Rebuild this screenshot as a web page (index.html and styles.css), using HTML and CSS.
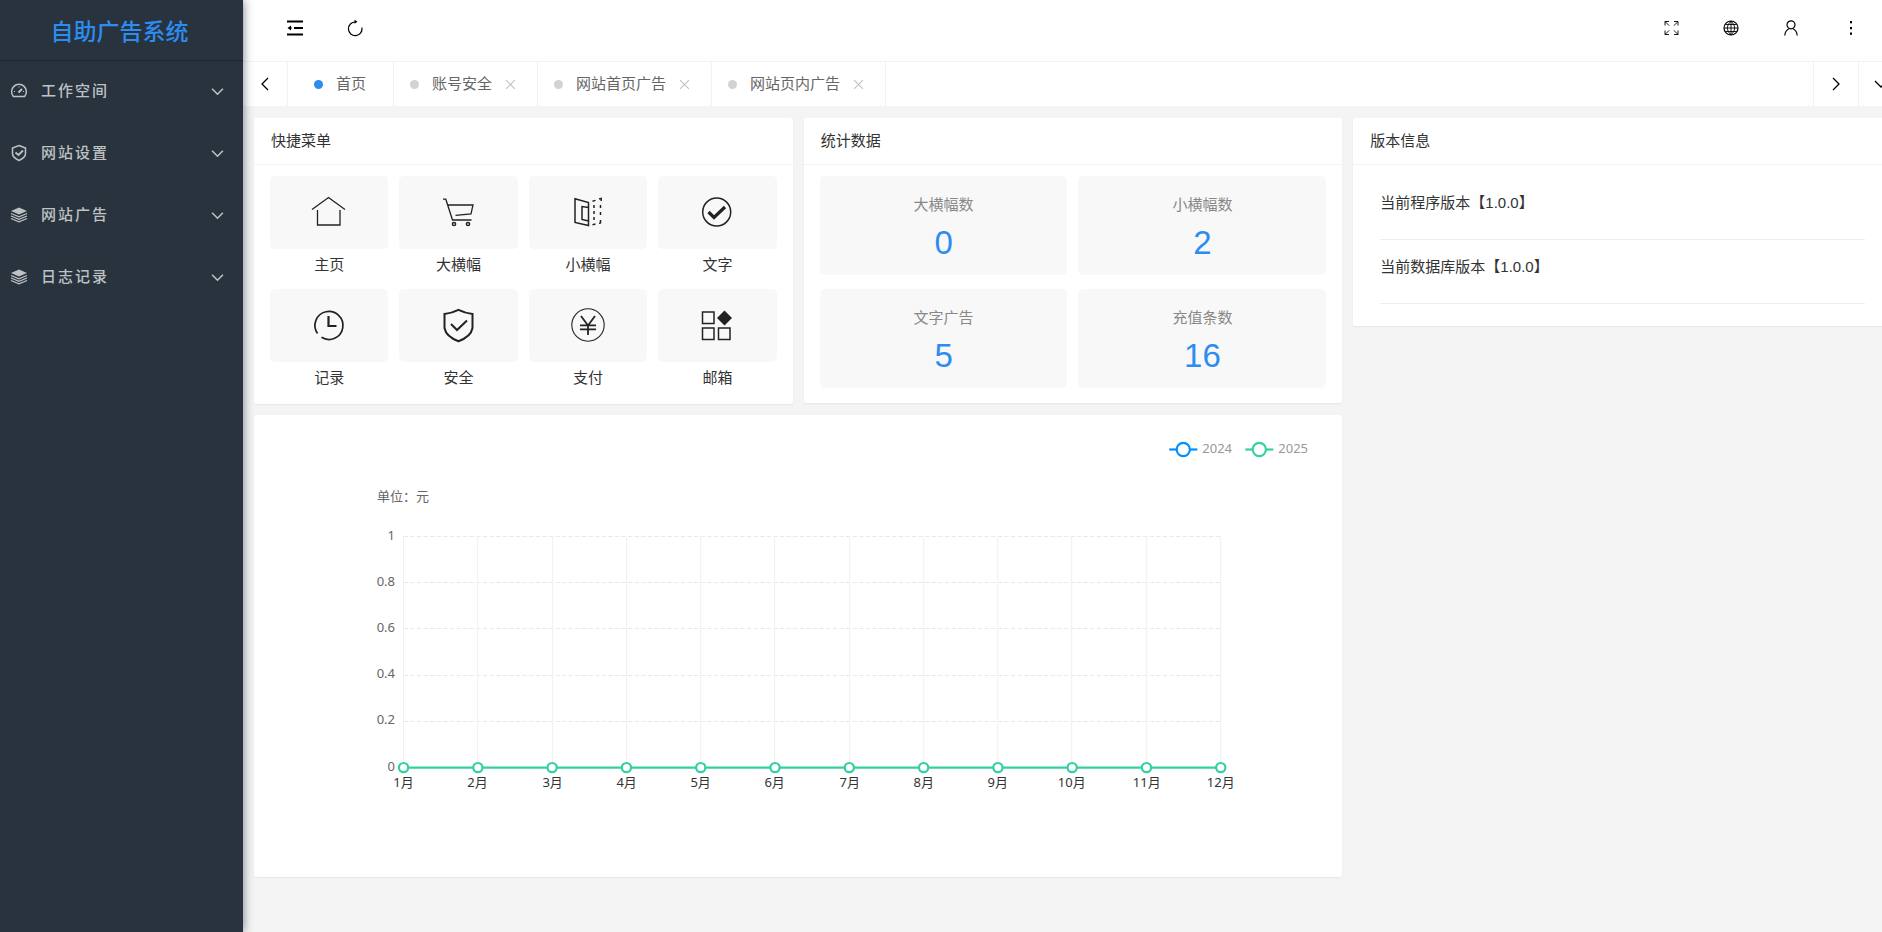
FILE: index.html
```
<!DOCTYPE html>
<html lang="zh-CN">
<head>
    <meta charset="UTF-8">
    <meta name="viewport" content="width=device-width, initial-scale=1.0">
    <title>自助广告系统</title>
    <link rel="stylesheet" href="styles.css">
</head>
<body>
    <div class="layout">
        <!-- Sidebar -->
        <aside class="side">
            <div class="logo">自助广告系统</div>
            <nav class="side-nav">
                <a href="#">
                    <svg class="nav-icon" viewBox="0 0 18 18"><path d="M3.4 14.6A7.4 7.4 0 1 1 14.6 14.6Z"/><path d="M8.5 10.5L12 7" stroke-width="2"/><path d="M4 9.5h1M9 4.5v1M13 9.5h1" stroke-width="1"/></svg>
                    <span>工作空间</span>
                    <svg class="nav-more" viewBox="0 0 12 8"><path d="M1 1.5L6 6.5L11 1.5"/></svg>
                </a>
                <a href="#">
                    <svg class="nav-icon" viewBox="0 0 18 18"><path d="M9 1.5L15.5 4V9.5Q15.5 13.5 9 16.5Q2.5 13.5 2.5 9.5V4Z"/><path d="M5.5 8.5L8.5 11L13 6.5" stroke-width="1.8"/></svg>
                    <span>网站设置</span>
                    <svg class="nav-more" viewBox="0 0 12 8"><path d="M1 1.5L6 6.5L11 1.5"/></svg>
                </a>
                <a href="#">
                    <svg class="nav-icon" viewBox="0 0 18 18"><path class="solid" d="M9 1.5L17 5L9 8.5L1 5Z"/><path d="M1 7.5L9 10.8L17 7.5M1 10L9 13.3L17 10M1 12.5L9 15.8L17 12.5" stroke-width="1.2"/></svg>
                    <span>网站广告</span>
                    <svg class="nav-more" viewBox="0 0 12 8"><path d="M1 1.5L6 6.5L11 1.5"/></svg>
                </a>
                <a href="#">
                    <svg class="nav-icon" viewBox="0 0 18 18"><path class="solid" d="M9 1.5L17 5L9 8.5L1 5Z"/><path d="M1 7.5L9 10.8L17 7.5M1 10L9 13.3L17 10M1 12.5L9 15.8L17 12.5" stroke-width="1.2"/></svg>
                    <span>日志记录</span>
                    <svg class="nav-more" viewBox="0 0 12 8"><path d="M1 1.5L6 6.5L11 1.5"/></svg>
                </a>
            </nav>
        </aside>

        <div class="main">
            <!-- Top bar -->
            <header class="header">
                <div class="tools">
                    <button type="button" aria-label="侧边伸缩">
                        <svg viewBox="0 0 18 18"><path d="M1 2.5H17M8 9H17M1 15.5H17" stroke-width="1.8"/><path class="solid" d="M1.500 9L5 6.500V11.500Z"/><path d="M4 9H6"/></svg>
                    </button>
                    <button type="button" aria-label="刷新">
                        <svg viewBox="0 0 18 18"><path d="M9.5 3A6.8 6.8 0 1 0 15.9 8.5"/><path class="solid" d="M8.5 .8L11.500 2.800L8.500 4.800Z"/></svg>
                    </button>
                </div>
                <div class="tools tools-right">
                    <button type="button" aria-label="全屏">
                        <svg viewBox="0 0 18 18" class="thin"><path d="M3 6.500V2.500H7M3 2.500L7.200 6.700M12 2.500H16V6.500M16 2.500L11.800 6.700M3 11.500V15.500H7M3 15.500L7.200 11.300M12 15.500H16V11.500M16 15.500L11.800 11.300"/></svg>
                    </button>
                    <button type="button" aria-label="网站">
                        <svg viewBox="0 0 18 18"><circle cx="9" cy="9" r="7"/><path d="M9 2Q1.500 9 9 16Q16.500 9 9 2M9 2V16M2 9H16M3.500 5.500H14.500M3.500 12.500H14.500" stroke-width=".9"/></svg>
                    </button>
                    <button type="button" aria-label="用户">
                        <svg viewBox="0 0 18 18"><circle cx="9" cy="5.8" r="4"/><path d="M2.8 16.500Q3.200 11.500 7 9.800M11 9.800Q14.800 11.500 15.200 16.500"/></svg>
                    </button>
                    <button type="button" aria-label="更多">
                        <svg viewBox="0 0 18 18"><g class="solid"><rect x="8" y="2" width="2" height="2.300"/><rect x="8" y="8" width="2" height="2.300"/><rect x="8" y="13.500" width="2" height="2.300"/></g></svg>
                    </button>
                </div>
            </header>

            <!-- Page tabs -->
            <div class="tabs">
                <button type="button" class="tab-ctrl" aria-label="向左"><svg viewBox="0 0 16 16"><path d="M11 2L5 8L11 14"/></svg></button>
                <ul class="tab-list">
                    <li class="active"><i></i><a href="#">首页</a></li>
                    <li><i></i><a href="#">账号安全</a><button type="button" aria-label="关闭"><svg viewBox="0 0 10 10"><path d="M1 1L9 9M9 1L1 9"/></svg></button></li>
                    <li><i></i><a href="#">网站首页广告</a><button type="button" aria-label="关闭"><svg viewBox="0 0 10 10"><path d="M1 1L9 9M9 1L1 9"/></svg></button></li>
                    <li><i></i><a href="#">网站页内广告</a><button type="button" aria-label="关闭"><svg viewBox="0 0 10 10"><path d="M1 1L9 9M9 1L1 9"/></svg></button></li>
                </ul>
                <button type="button" class="tab-ctrl" aria-label="向右"><svg viewBox="0 0 16 16"><path d="M5 2L11 8L5 14"/></svg></button>
                <button type="button" class="tab-ctrl" aria-label="标签操作"><svg viewBox="0 0 16 16"><path d="M2 5L8 11L14 5"/></svg></button>
            </div>

            <main class="content">
                <section class="card">
                    <h2>快捷菜单</h2>
                    <div class="quick">
                        <a href="#"><span class="tile"><svg viewBox="0 0 36 36"><path d="M1 14.5L17.5 2.5L34 14.5M6.5 15V30H29V15" stroke-width="1.3"/></svg></span>主页</a>
                        <a href="#"><span class="tile"><svg viewBox="0 0 36 36"><path d="M2 4.2H4.8L11.5 25H30.5M7 10H32L30 18.8L14.5 20.3" stroke-width="1.3"/><circle cx="13" cy="29" r="1.6"/><circle cx="27" cy="29" r="1.6"/></svg></span>大横幅</a>
                        <a href="#"><span class="tile"><svg viewBox="0 0 36 36"><path d="M5 3.8L18.5 7.500V30.500L5 27.500ZM18.500 12.500L12 11.500V24.500L18.500 26"/><path d="M22.500 6.200L25.500 5.400M24 10V13M24 16V19M24 22V25M22.500 29.700L25.500 29M29 4L31.200 3.400V6M30.500 10V13M30.500 17V20M30.500 25V28L29 28.400"/></svg></span>小横幅</a>
                        <a href="#"><span class="tile"><svg viewBox="0 0 36 36"><circle cx="17.7" cy="17" r="14"/><path d="M9.5 17L15 22.5L26 12" stroke-width="3.2"/></svg></span>文字</a>
                        <a href="#"><span class="tile"><svg viewBox="0 0 36 36"><path d="M6.500 25.500A14 14 0 1 1 10.500 29.300" stroke-width="1.7"/><path d="M17.5 8V18H25.5" stroke-width="2.2"/></svg></span>记录</a>
                        <a href="#"><span class="tile"><svg viewBox="0 0 36 36"><path d="M17.5 1.8Q24 5 31.5 6V20Q30 28.5 17.5 33.2Q5 28.5 3.5 20V6Q11 5 17.5 1.8ZM10 16L16 22L26 12.5" stroke-width="2"/></svg></span>安全</a>
                        <a href="#"><span class="tile"><svg viewBox="0 0 36 36"><circle cx="18" cy="17" r="16.2" stroke-width="1.1"/><path d="M11 8L18 17.5L25 8M18 17V27M10 17.3H26M10 21.3H26" stroke-width="1.8"/></svg></span>支付</a>
                        <a href="#"><span class="tile"><svg viewBox="0 0 36 36"><path d="M3.5 4H15V15.5H3.5ZM3.5 20H15V31.5H3.5ZM19.5 20H31V31.5H19.5Z"/><path class="solid" d="M25.5 2.5L33 10L25.5 17.5L18 10Z"/></svg></span>邮箱</a>
                    </div>
                </section>

                <section class="card">
                    <h2>统计数据</h2>
                    <div class="stats">
                        <div class="stat"><h3>大横幅数</h3><p>0</p></div>
                        <div class="stat"><h3>小横幅数</h3><p>2</p></div>
                        <div class="stat"><h3>文字广告</h3><p>5</p></div>
                        <div class="stat"><h3>充值条数</h3><p>16</p></div>
                    </div>
                </section>

                <section class="card">
                    <h2>版本信息</h2>
                    <ul class="version">
                        <li>当前程序版本【1.0.0】</li>
                        <li>当前数据库版本【1.0.0】</li>
                    </ul>
                </section>

                <!-- Line chart, filled in by chart.js -->
                <section class="card card-chart">
                    <svg id="chart" class="chart" viewBox="0 0 1088 462" role="img" aria-label="月度金额"></svg>
                </section>
            </main>
        </div>
    </div>
    <script src="chart.js"></script>
</body>
</html>
```

FILE: styles.css
```
* {
    box-sizing: border-box;
}
body {
    margin: 0;
    height: 100vh;
    overflow: hidden;
    background-color: #f4f4f4;
    color: #333;
    font-family: "Liberation Sans", "Noto Sans CJK SC", sans-serif;
    font-size: 15px;
    line-height: 24px;
}
h2, h3, p, ul {
    margin: 0;
    padding: 0;
    font-size: 15px;
    font-weight: 400;
    list-style: none;
}
a {
    color: inherit;
    text-decoration: none;
}
button {
    display: flex;
    align-items: center;
    justify-content: center;
    padding: 0;
    border: 0;
    background: none;
    color: #000;
    cursor: pointer;
}
svg {
    display: block;
    fill: none;
    stroke: currentColor;
    stroke-width: 1.5;
}
.solid {
    fill: currentColor;
    stroke: none;
}
.layout {
    display: flex;
    height: 100%;
}

/* Sidebar */
.side {
    position: relative;
    z-index: 1;
    flex: 0 0 243px;
    background-color: #28333e;
    box-shadow: 1px 0 9px rgba(0, 21, 41, 0.45);
}
.logo {
    height: 60px;
    padding: 4px 4px 0 0;
    line-height: 56px;
    text-align: center;
    font-size: 23px;
    font-weight: 500;
    color: #2d8cf0;
    box-shadow: 0 1px 1px rgba(0, 0, 0, 0.2);
}
.side-nav a {
    display: flex;
    align-items: center;
    height: 62px;
    padding: 0 19px 0 10px;
    color: #bec2c5;
}
.side-nav span {
    flex: 1;
    margin-left: 13px;
    font-weight: 500;
    letter-spacing: 2px;
}
.nav-icon {
    width: 18px;
    height: 18px;
}
.nav-more {
    width: 13px;
    height: 9px;
}

/* The work area runs past the right edge of the window */
.main {
    flex: 0 0 calc(100% - 222px);
}
.header {
    display: flex;
    justify-content: space-between;
    height: 62px;
    padding: 0 22px;
    border-bottom: 1px solid #f2f2f2;
    background-color: #fff;
}
.tools {
    display: flex;
}
.tools button {
    width: 60px;
    height: 55px;
}
.tools svg {
    width: 18px;
    height: 18px;
    stroke-width: 1.2;
}
.tools .thin {
    stroke-width: 0.9;
}

/* Tabs */
.tabs {
    display: flex;
    height: 44px;
    background-color: #fff;
}
.tab-ctrl {
    flex: 0 0 45px;
    border-left: 1px solid #f2f2f2;
}
.tab-ctrl:first-child {
    border-left: 0;
    border-right: 1px solid #f2f2f2;
}
.tab-ctrl svg {
    width: 16px;
    height: 16px;
    stroke-width: 1.3;
}
.tab-list {
    display: flex;
    flex: 1;
}
.tab-list li {
    display: flex;
    align-items: center;
    gap: 13px;
    padding: 0 21px 0 16px;
    border-right: 1px solid #f2f2f2;
    color: #666;
}
.tab-list li.active {
    padding: 0 27px 0 26px;
}
.tab-list i {
    width: 9px;
    height: 9px;
    border-radius: 50%;
    background-color: #d2d2d2;
}
.tab-list .active i {
    background-color: #2d8cf0;
}
.tab-list button {
    color: #c2c2c2;
}
.tab-list svg {
    width: 11px;
    height: 11px;
    stroke-width: 1;
}

/* Cards */
.content {
    display: grid;
    grid-template-columns: repeat(3, 1fr);
    align-items: start;
    gap: 11px;
    padding: 12px 11px;
}
.card {
    border-radius: 2px;
    background-color: #fff;
    box-shadow: 0 1px 2px rgba(0, 0, 0, 0.06);
}
.card h2 {
    padding: 0 17px;
    line-height: 46px;
    border-bottom: 1px solid #f4f4f4;
}
.quick {
    display: grid;
    grid-template-columns: repeat(4, 1fr);
    gap: 8px 11px;
    padding: 11px 16px 10px;
}
.quick a {
    text-align: center;
    line-height: 32px;
}
.tile {
    display: flex;
    align-items: center;
    justify-content: center;
    height: 73px;
    border-radius: 5px;
    background-color: #f8f8f8;
    color: #222;
}
.tile svg {
    width: 36px;
    height: 36px;
}
.stats {
    display: grid;
    grid-template-columns: 1fr 1fr;
    gap: 14px 11px;
    padding: 11px 16px 15px;
}
.stat {
    padding: 17px 11px 6px;
    border-radius: 5px;
    background-color: #f8f8f8;
    text-align: center;
}
.stat h3 {
    color: #888;
}
.stat p {
    font-size: 33px;
    line-height: 52px;
    color: #2d8cf0;
}
.version {
    padding: 11px 27px 22px;
}
.version li {
    padding: 15px 0 24px;
    border-bottom: 1px solid #eee;
}

/* Chart */
.card-chart {
    grid-column: span 2;
}
.chart {
    width: 100%;
    font-family: "Noto Sans", "Noto Sans CJK SC", sans-serif;
    font-size: 13px;
}
.chart text {
    fill: #666;
    stroke: none;
}
.chart .month {
    fill: #333;
    text-anchor: middle;
}
.chart .value {
    text-anchor: end;
}
.chart .legend {
    fill: #999;
}
.chart .grid-x {
    stroke: #f0f0f0;
    stroke-width: 1;
}
.chart .grid-y {
    stroke: #e9e9e9;
    stroke-width: 1;
    stroke-dasharray: 4.4 2.2;
}
.chart .y2024 {
    stroke: #0090ff;
    stroke-width: 2.2;
}
.chart .y2025 {
    stroke: #36cfa3;
    stroke-width: 2.2;
}
.chart circle {
    fill: #fff;
}
```

FILE: chart.js
```
const plot = { left: 149.5, right: 966.5, top: 121.5, bottom: 352.5 };
const ticks = ['0', '0.2', '0.4', '0.6', '0.8', '1'];
const data2025 = [0, 0, 0, 0, 0, 0, 0, 0, 0, 0, 0, 0];
const chart = document.getElementById('chart');

function add(tag, attrs, text) {
    const el = document.createElementNS('http://www.w3.org/2000/svg', tag);
    for (const key in attrs) {
        el.setAttribute(key, attrs[key]);
    }
    if (text) {
        el.textContent = text;
    }
    chart.appendChild(el);
}

const stepX = (plot.right - plot.left) / (data2025.length - 1);
const stepY = (plot.bottom - plot.top) / (ticks.length - 1);

// Grid and axis labels
add('text', { x: 123, y: 86 }, '单位：元');
ticks.forEach((tick, i) => {
    const y = plot.bottom - i * stepY;
    if (i > 0) {
        const lineY = Math.floor(y) + 0.5;
        add('line', { class: 'grid-y', x1: plot.left, x2: plot.right, y1: lineY, y2: lineY });
    }
    add('text', { class: 'value', x: 141, y: y + 3 }, tick);
});
data2025.forEach((value, i) => {
    const x = Math.floor(plot.left + i * stepX) + 0.5;
    add('line', { class: 'grid-x', x1: x, x2: x, y1: plot.top, y2: plot.bottom });
    add('text', { class: 'month', x: x, y: plot.bottom + 19 }, (i + 1) + '月');
});

// Series
const points = data2025.map((value, i) => [plot.left + i * stepX, plot.bottom - value * (plot.bottom - plot.top)]);
add('polyline', { class: 'y2025', points: points.join(' ') });
points.forEach(([x, y]) => add('circle', { class: 'y2025', cx: x, cy: y, r: 4.6 }));

// Legend
[['2024', 915], ['2025', 991]].forEach(([year, x]) => {
    add('line', { class: 'y' + year, x1: x, x2: x + 28, y1: 34.5, y2: 34.5 });
    add('circle', { class: 'y' + year, cx: x + 14, cy: 34.5, r: 6.6 });
    add('text', { class: 'legend', x: x + 33, y: 38 }, year);
});
```
